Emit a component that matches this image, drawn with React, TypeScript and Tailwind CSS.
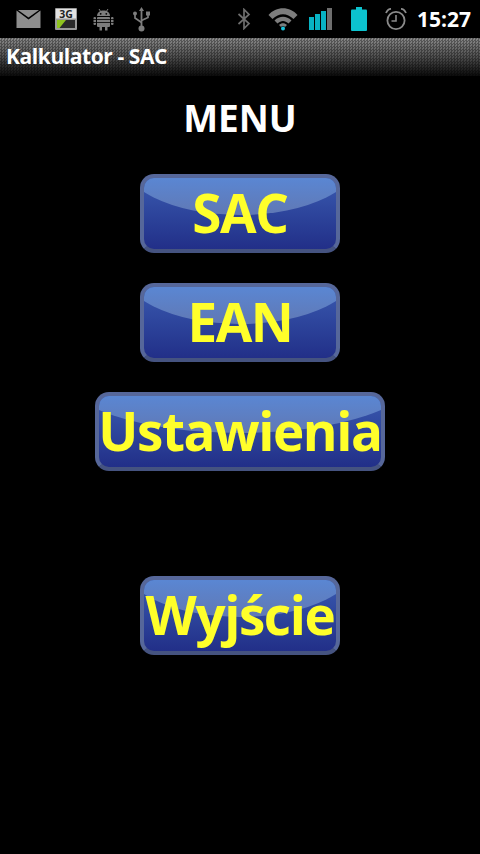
const font = "font-['Open_Sans','Noto_Sans',sans-serif]";

const MailIcon = () => (
  <svg width="25" height="18" viewBox="0 0 24 18">
    <path d="M0 0.5 L12 9.5 L24 0.5 V18 H0 Z" fill="#8e8e8e" />
    <path d="M1.5 0 H22.5 L12 7.6 Z" fill="#8e8e8e" />
  </svg>
);

const ThreeGIcon = () => (
  <svg width="22" height="22" viewBox="0 0 22 22">
    <rect x="0" y="0" width="22" height="22" rx="1" fill="#9a9a9a" />
    <rect x="1" y="1" width="20" height="9.5" fill="#e2e2e2" />
    <text x="11" y="9.5" textAnchor="middle" fontSize="10.5" fontWeight="700" fill="#222" fontFamily="Open Sans, sans-serif">3G</text>
    <rect x="2" y="12" width="18" height="8" fill="#2a2a2a" />
    <path d="M2 12 H11 L4.5 20 H2 Z" fill="#8fc31f" />
  </svg>
);

const AndroidIcon = () => (
  <svg width="21" height="23" viewBox="0 0 21 23" fill="#7d7d7d">
    <path d="M4 8 C4 4.5 7 2.5 10.5 2.5 C14 2.5 17 4.5 17 8 Z" />
    <path d="M6 1 L8 4 M15 1 L13 4" stroke="#7d7d7d" strokeWidth="1" />
    <rect x="4" y="9" width="13" height="10" rx="1" />
    <rect x="6.5" y="19" width="2.5" height="3.5" />
    <rect x="12" y="19" width="2.5" height="3.5" />
    <rect x="0.5" y="9" width="2.5" height="8" rx="1" />
    <rect x="18" y="9" width="2.5" height="8" rx="1" />
    <circle cx="7.7" cy="5.8" r="0.9" fill="#000" />
    <circle cx="13.3" cy="5.8" r="0.9" fill="#000" />
    <path d="M0 11.5 H21 M0 14.5 H21" stroke="#000" strokeWidth="0.8" />
  </svg>
);

const UsbIcon = () => (
  <svg width="17" height="25" viewBox="0 0 17 25" fill="#7d7d7d">
    <path d="M8.5 0 L11 4 H6 Z" />
    <rect x="7.6" y="3" width="1.8" height="18" />
    <circle cx="8.5" cy="21.5" r="3" />
    <path d="M2 7 V11 L8.5 15.5 M15 8 V10.5 L8.5 13.5" fill="none" stroke="#7d7d7d" strokeWidth="1.7" />
    <circle cx="2" cy="6.5" r="2" />
    <rect x="13" y="4.5" width="4" height="4" />
  </svg>
);

const BluetoothIcon = () => (
  <svg width="14" height="22" viewBox="0 0 14 22" fill="none" stroke="#6e6e6e" strokeWidth="1.7">
    <path d="M1.5 6 L12 15.5 L7 20.5 V1.5 L12 6.5 L1.5 16" />
  </svg>
);

const WifiIcon = () => (
  <svg width="30" height="24" viewBox="0 0 30 24">
    <path d="M0.5 8 C8 -1 22 -1 29.5 8 L25.5 12 C19 5.5 11 5.5 4.5 12 Z" fill="#7d7d7d" />
    <path d="M6.5 13.5 C11.5 8.5 18.5 8.5 23.5 13.5 L20.5 16.5 C17 13 13 13 9.5 16.5 Z" fill="#7d7d7d" />
    <path d="M11 18 C13.5 15.5 16.5 15.5 19 18 L17 20 C16 18.8 14 18.8 13 20 Z" fill="#7d7d7d" />
    <circle cx="15" cy="21.5" r="2" fill="#19c3dc" />
  </svg>
);

const SignalIcon = () => (
  <svg width="24" height="22" viewBox="0 0 24 22">
    <rect x="0" y="9" width="5" height="13" fill="#08b3c4" />
    <rect x="6" y="6" width="5" height="16" fill="#08b3c4" />
    <rect x="12" y="3" width="5" height="19" fill="#08b3c4" />
    <rect x="18" y="0" width="5" height="22" fill="#6e6e6e" />
  </svg>
);

const BatteryIcon = () => (
  <svg width="16" height="24" viewBox="0 0 16 24">
    <rect x="5" y="0" width="6" height="3" fill="#0cc3cf" />
    <rect x="0" y="2.5" width="16" height="21.5" rx="1" fill="#0cc3cf" />
  </svg>
);

const AlarmIcon = () => (
  <svg width="22" height="22" viewBox="0 0 22 22" fill="none" stroke="#8a8a8a">
    <circle cx="11" cy="12.5" r="8.6" strokeWidth="1.8" />
    <path d="M11 7 V13 H6.5" strokeWidth="1.6" />
    <path d="M1 5 C2 2.5 4 1 6 0.8 M21 5 C20 2.5 18 1 16 0.8" strokeWidth="1.8" />
  </svg>
);

const StatusBar = () => (
  <div className="flex h-[38px] items-center bg-black">
    <div className="ml-[16px] w-[25px]"><MailIcon /></div>
    <div className="ml-[14px] w-[22px]"><ThreeGIcon /></div>
    <div className="ml-[16px] w-[21px]"><AndroidIcon /></div>
    <div className="ml-[19px] w-[17px]"><UsbIcon /></div>
    <div className="ml-[87px] w-[14px]"><BluetoothIcon /></div>
    <div className="ml-[17px] w-[30px]"><WifiIcon /></div>
    <div className="ml-[11px] w-[24px]"><SignalIcon /></div>
    <div className="ml-[18px] w-[16px]"><BatteryIcon /></div>
    <div className="ml-[18px] w-[22px]"><AlarmIcon /></div>
    <span className={`ml-[10px] text-[21px] font-bold leading-none text-white ${font}`}>15:27</span>
  </div>
);

const TitleBar = () => (
  <div className="relative flex h-[38px] items-center bg-linear-to-b from-[#8a8a8a] via-[#4e4e4e] to-[#0c0c0c] px-[6px]">
    <div className="absolute inset-0 bg-[repeating-conic-gradient(#00000055_0%_25%,#ffffff00_0%_50%)] bg-size-[3px_3px]" />
    <span className={`relative -mt-[2px] text-[21px] font-bold leading-none tracking-[-0.42px] text-white ${font}`}>Kalkulator - SAC</span>
  </div>
);

const MenuButton = ({ label, width, className = "" }: { label: string; width: string; className?: string }) => (
  <button className={`relative flex h-[79px] items-center justify-center rounded-[14px] border-[4px] border-[#56679a] border-b-[#455380] bg-linear-to-b from-[#3a5ab0] to-[#222f88] ${width} ${className}`}>
    <div className="absolute inset-0 overflow-hidden rounded-[10px]">
      <div className="absolute left-[-13.5%] top-[-83px] h-[120px] w-[127%] rounded-[50%] bg-linear-to-b from-[#5a86d2] from-70% to-[#6078b4]" />
    </div>
    <span className={`relative -mt-[2px] whitespace-nowrap text-[53px] font-bold leading-none tracking-[-1.4px] text-[#ffff2a] ${font}`}>{label}</span>
  </button>
);

export default function App() {
  return (
    <div className={`flex h-[854px] w-[480px] flex-col overflow-hidden bg-black ${font}`}>
      <StatusBar />
      <TitleBar />
      <main className="flex flex-col items-center">
        <h1 className="mt-[21px] text-[37px] font-bold leading-[42px] text-white">MENU</h1>
        <MenuButton label="SAC" width="w-[200px]" className="mt-[35px]" />
        <MenuButton label="EAN" width="w-[200px]" className="mt-[30px]" />
        <MenuButton label="Ustawienia" width="w-[290px]" className="mt-[30px]" />
        <MenuButton label="Wyjście" width="w-[200px]" className="mt-[105px]" />
      </main>
    </div>
  );
}
